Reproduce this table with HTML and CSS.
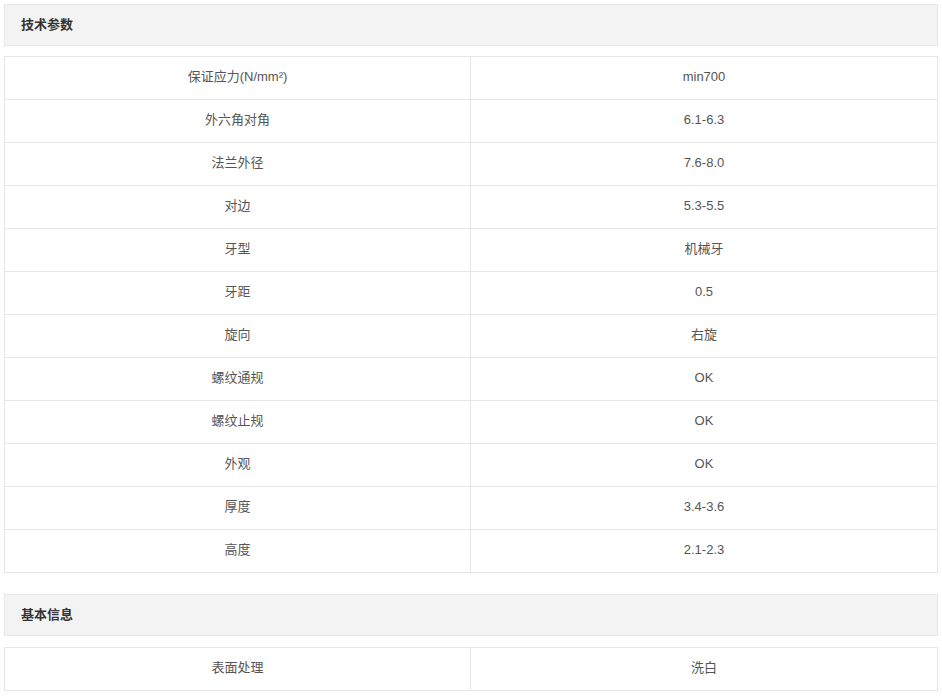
FILE: index.html
```html
<!DOCTYPE html>
<html lang="zh-CN">
<head>
<meta charset="utf-8">
<title>技术参数</title>
<link rel="stylesheet" href="styles.css">
</head>
<body>
<div class="page">
  <div class="section-title">技术参数</div>
  <table class="params">
    <tr><td>保证应力(N/mm²)</td><td>min700</td></tr>
    <tr><td>外六角对角</td><td>6.1-6.3</td></tr>
    <tr><td>法兰外径</td><td>7.6-8.0</td></tr>
    <tr><td>对边</td><td>5.3-5.5</td></tr>
    <tr><td>牙型</td><td>机械牙</td></tr>
    <tr><td>牙距</td><td>0.5</td></tr>
    <tr><td>旋向</td><td>右旋</td></tr>
    <tr><td>螺纹通规</td><td>OK</td></tr>
    <tr><td>螺纹止规</td><td>OK</td></tr>
    <tr><td>外观</td><td>OK</td></tr>
    <tr><td>厚度</td><td>3.4-3.6</td></tr>
    <tr><td>高度</td><td>2.1-2.3</td></tr>
  </table>
  <div class="section-title second">基本信息</div>
  <table class="params last">
    <tr><td>表面处理</td><td>洗白</td></tr>
  </table>
</div>
</body>
</html>
```
FILE: styles.css
```css
html, body {
  margin: 0;
  padding: 0;
  background: #fff;
}
.page {
  padding: 4px;
  width: 934px;
  font-family: "Liberation Sans", "Noto Sans CJK SC", sans-serif;
}
.section-title {
  box-sizing: border-box;
  height: 42px;
  line-height: 40px;
  border: 1px solid #e6e6e6;
  background: #f3f3f3;
  padding-left: 16px;
  font-size: 13px;
  font-weight: bold;
  color: #333;
}
.section-title.second {
  margin-top: 21px;
}
.params {
  margin-top: 10px;
  width: 934px;
  border-collapse: collapse;
  table-layout: fixed;
}
.params.last {
  margin-top: 11px;
}
.params td {
  border: 1px solid #e6e6e6;
  height: 39px;
  padding: 0 0 3px;
  line-height: 16px;
  text-align: center;
  font-size: 13px;
  color: #555;
}
.params td:first-child {
  width: 465px;
}
```
